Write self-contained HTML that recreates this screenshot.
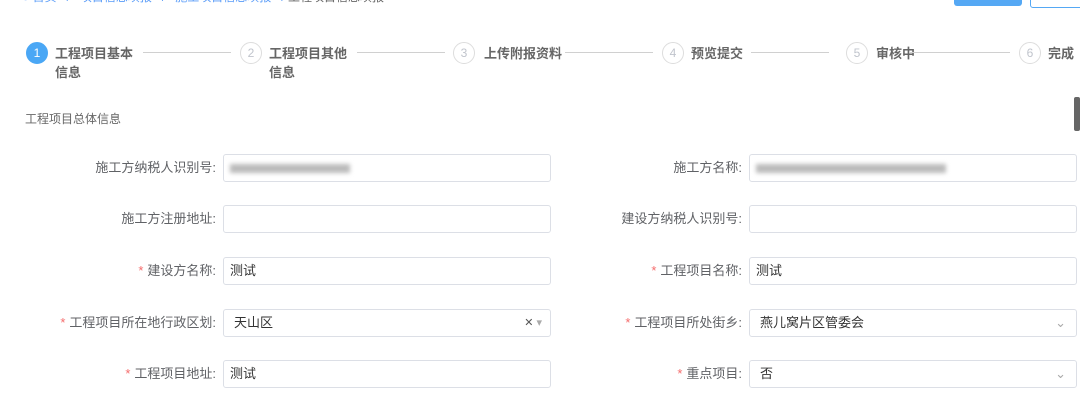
<!DOCTYPE html><html><head><meta charset="utf-8"><style>
body{margin:0;width:1080px;height:407px;background:#fff;position:relative;overflow:hidden;font-family:"Liberation Sans","Noto Sans CJK SC",sans-serif;font-size:13px;color:#606266}
.a{position:absolute}
.circ{position:absolute;width:20px;height:20px;border:1px solid #ddd;border-radius:50%;text-align:center;line-height:20px;color:#c0c4cc;font-size:12px;top:42px}
.st{position:absolute;top:44px;font-weight:bold;color:#666;font-size:13px;line-height:19px}
.ln{position:absolute;top:52px;height:1px;background:#d0d0d0}
.lab{position:absolute;text-align:right;font-size:13px;color:#606266;line-height:28px}
.lab i{color:#f56c6c;font-style:normal;margin-right:4px}
.in{position:absolute;height:28px;border:1px solid #dcdfe6;border-radius:3px;width:328px;line-height:26px;padding-left:6px;box-sizing:border-box;color:#333}
.blur{position:absolute;top:9px;height:9px;background:#bbb;filter:blur(2px)}
</style></head><body>
<div class="a" style="top:-12px;left:22px;color:#5a9cf8;font-size:12px">● 首页 &nbsp; / &nbsp; 项目信息填报 &nbsp; / &nbsp; 施工项目信息填报 &nbsp; / <span style="color:#666">工程项目信息填报</span></div>
<div class="a" style="left:954px;top:-4px;width:68px;height:10px;background:#55a8f4;border-radius:3px"></div>
<div class="a" style="left:1030px;top:-4px;width:60px;height:10px;border:1px solid #55a8f4;border-radius:3px"></div>
<div class="a" style="left:1074px;top:97px;width:6px;height:34px;background:#666;border-radius:2px"></div>

<div class="circ" style="left:26px;background:#4aa7f5;border-color:#4aa7f5;color:#fff">1</div>
<div class="st" style="left:55px">工程项目基本<br>信息</div>
<div class="ln" style="left:143px;width:88px"></div>
<div class="circ" style="left:240px">2</div>
<div class="st" style="left:269px">工程项目其他<br>信息</div>
<div class="ln" style="left:357px;width:88px"></div>
<div class="circ" style="left:453px">3</div>
<div class="st" style="left:484px">上传附报资料</div>
<div class="ln" style="left:565px;width:88px"></div>
<div class="circ" style="left:662px">4</div>
<div class="st" style="left:691px">预览提交</div>
<div class="ln" style="left:751px;width:78px"></div>
<div class="circ" style="left:846px">5</div>
<div class="st" style="left:876px">审核中</div>
<div class="ln" style="left:910px;width:100px"></div>
<div class="circ" style="left:1019px">6</div>
<div class="st" style="left:1048px">完成</div>

<div class="a" style="left:25px;top:110px;font-size:12px;color:#666">工程项目总体信息</div>

<div class="lab" style="left:0;width:216px;top:154px">施工方纳税人识别号:</div>
<div class="in" style="left:223px;top:154px"><div class="blur" style="left:6px;width:120px"></div></div>
<div class="lab" style="left:500px;width:242px;top:154px">施工方名称:</div>
<div class="in" style="left:749px;top:154px"><div class="blur" style="left:6px;width:190px"></div></div>

<div class="lab" style="left:0;width:216px;top:205px">施工方注册地址:</div>
<div class="in" style="left:223px;top:205px"></div>
<div class="lab" style="left:500px;width:242px;top:205px">建设方纳税人识别号:</div>
<div class="in" style="left:749px;top:205px"></div>

<div class="lab" style="left:0;width:216px;top:257px"><i>*</i>建设方名称:</div>
<div class="in" style="left:223px;top:257px">测试</div>
<div class="lab" style="left:500px;width:242px;top:257px"><i>*</i>工程项目名称:</div>
<div class="in" style="left:749px;top:257px">测试</div>

<div class="lab" style="left:0;width:216px;top:309px"><i>*</i>工程项目所在地行政区划:</div>
<div class="in" style="left:223px;top:309px;padding-left:10px">天山区<span style="position:absolute;right:8px;font-size:11px;color:#555">✕ <span style="color:#aaa">▾</span></span></div>
<div class="lab" style="left:500px;width:242px;top:309px"><i>*</i>工程项目所处街乡:</div>
<div class="in" style="left:749px;top:309px;padding-left:10px">燕儿窝片区管委会<span style="position:absolute;right:10px;color:#aaa">⌄</span></div>

<div class="lab" style="left:0;width:216px;top:360px"><i>*</i>工程项目地址:</div>
<div class="in" style="left:223px;top:360px">测试</div>
<div class="lab" style="left:500px;width:242px;top:360px"><i>*</i>重点项目:</div>
<div class="in" style="left:749px;top:360px;padding-left:10px">否<span style="position:absolute;right:10px;color:#aaa">⌄</span></div>
</body></html>
